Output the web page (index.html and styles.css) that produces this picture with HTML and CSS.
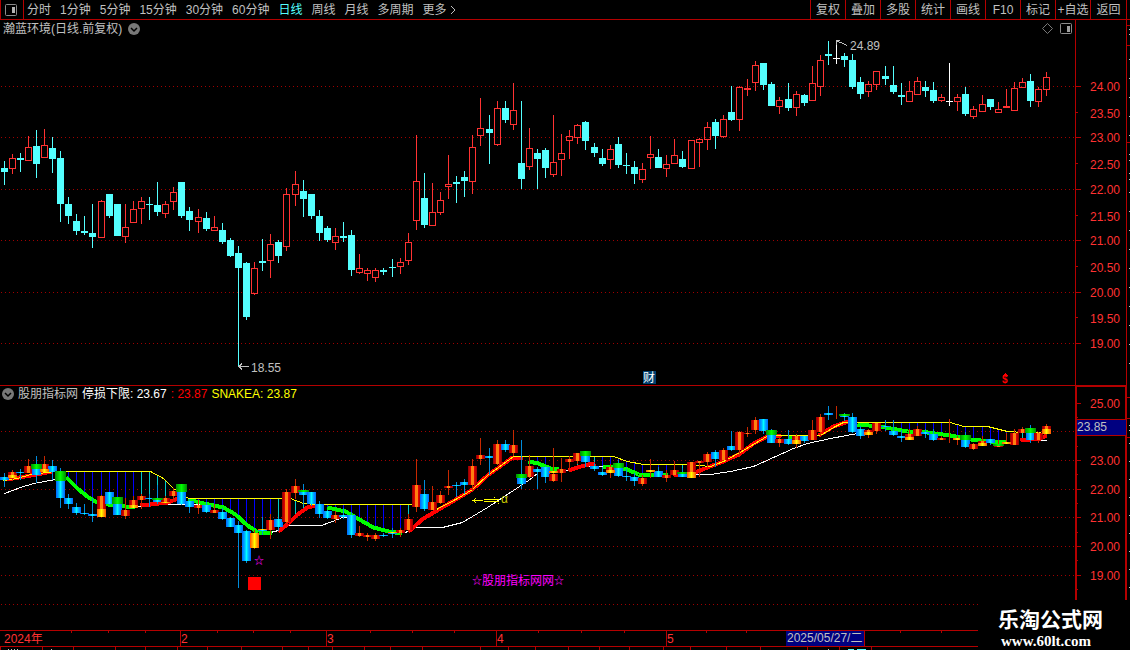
FILE: index.html
```html
<!DOCTYPE html>
<html lang="zh-CN">

<head>
    <meta charset="UTF-8">
    <meta name="viewport" content="width=device-width, initial-scale=1.0">
    <title>瀚蓝环境 日线</title>
    <link rel="stylesheet" href="styles.css">
</head>

<body>
    <header class="topbar">
        <button class="side-toggle" aria-label="侧栏">
            <svg width="12" height="12" viewBox="0 0 12 12">
                <rect x="0.5" y="0.5" width="11" height="11" rx="1" fill="none" stroke="#8c8c8c"/>
                <rect x="7" y="3" width="3" height="6" fill="#b4b4b4"/>
            </svg>
        </button>
        <nav class="periods">
            <button>分时</button>
            <button>1分钟</button>
            <button>5分钟</button>
            <button>15分钟</button>
            <button>30分钟</button>
            <button>60分钟</button>
            <button class="active">日线</button>
            <button>周线</button>
            <button>月线</button>
            <button>多周期</button>
            <button class="more">更多
                <svg width="6" height="10" viewBox="0 0 6 10"><path d="M1 1l4 4-4 4" fill="none" stroke="#c0c0c0"/></svg>
            </button>
        </nav>
        <div class="tools">
            <button>复权</button>
            <button>叠加</button>
            <button>多股</button>
            <button>统计</button>
            <button>画线</button>
            <button>F10</button>
            <button>标记</button>
            <button>+自选</button>
            <button>返回</button>
        </div>
    </header>

    <div class="content">
        <main>
            <section class="pane price">
                <div class="plot">
                    <div class="pane-title">
                        <span>瀚蓝环境(日线.前复权)</span>
                        <svg width="12" height="12" viewBox="0 0 12 12"><circle cx="6" cy="6" r="6" fill="#787878"/><path d="M3 5l3 3 3-3" fill="none" stroke="#000" stroke-width="1.5"/></svg>
                        <div class="pane-tools">
                            <svg width="11" height="11" viewBox="0 0 11 11"><path d="M5.5 0.5l5 5-5 5-5-5z" fill="none" stroke="#787878"/></svg>
                            <svg width="12" height="12" viewBox="0 0 12 12"><rect x="0.5" y="0.5" width="11" height="10" rx="1" fill="none" stroke="#8c8c8c"/><rect x="7" y="3" width="3" height="6" fill="#a0a0a0"/></svg>
                        </div>
                    </div>
                    <svg id="price" class="chart"></svg>
                </div>
                <svg id="price-axis" class="axis"></svg>
            </section>
            <section class="pane snake">
                <div class="plot">
                    <div class="pane-title">
                        <svg width="12" height="12" viewBox="0 0 12 12"><circle cx="6" cy="6" r="6" fill="#787878"/><path d="M3 5l3 3 3-3" fill="none" stroke="#000" stroke-width="1.5"/></svg>
                        <span>股朋指标网</span>
                        <span class="white">停损下限: 23.67</span>
                        <span class="red">: 23.87</span>
                        <span class="yellow">SNAKEA: 23.87</span>
                    </div>
                    <svg id="snake" class="chart"></svg>
                </div>
                <svg id="snake-axis" class="axis"></svg>
            </section>
        </main>
        <aside>
            <svg id="edge" width="3"></svg>
        </aside>
    </div>

    <footer>
        <svg id="dates"></svg>
        <div class="watermark">
            <strong>乐淘公式网</strong>
            <a href="#">www.60lt.com</a>
        </div>
    </footer>

    <script>
        //data: 最高,实体上,实体下,最低,颜色 (c 阴 r 阳 w 平), 单位为主图的行
        const candles = `161,168,172,185,c 154,158,169,174,r 153,158,160,172,c 136,147,161,161,r 130,146,164,178,c
            129,145,158,158,r 137,148,159,173,c 151,158,204,222,c 197,204,216,224,c 214,221,231,235,c
            216,231,233,235,c 204,233,237,248,c 200,201,238,238,r 194,194,216,218,c 204,204,236,236,c
            204,227,237,243,r 201,209,223,223,r 197,201,209,224,r 197,204,205,220,c 182,205,212,216,c
            201,204,214,218,r 187,192,202,210,r 182,182,216,218,c 207,211,220,231,c 209,217,222,233,r
            212,218,229,231,c 216,227,231,231,r 223,230,242,244,c 238,240,256,257,c 246,253,268,366,c
            262,263,317,320,c 262,268,294,295,r 239,261,263,271,c 234,244,261,278,r 240,242,256,263,c
            188,194,247,251,r 171,184,195,206,r 180,191,199,217,c 194,194,216,219,c 210,216,233,241,c
            226,228,240,242,c 228,236,243,250,r 222,236,238,242,c 230,235,270,276,c 254,268,273,274,r
            268,270,274,281,r 268,270,278,282,r 268,270,272,275,c 259,267,268,277,c 258,262,267,274,r
            233,242,261,265,r 135,181,221,230,r 173,198,225,228,c 183,212,226,226,r 192,200,213,215,r
            155,184,187,199,r 176,182,184,203,c 171,177,181,197,c 135,147,182,194,r 98,128,136,146,r
            115,129,133,164,c 101,108,145,146,r 101,108,120,123,c 83,110,125,130,r 101,163,179,189,c
            128,148,167,170,r 149,153,159,189,c 148,150,168,178,c 115,162,175,177,r 134,153,160,176,r
            130,136,141,159,r 124,125,138,144,r 121,122,141,150,c 143,147,153,157,c 149,158,164,166,c
            145,149,160,169,r 137,144,165,168,c 153,165,166,174,c 161,167,174,184,c 163,169,180,183,r
            136,154,158,169,r 149,157,168,168,c 155,164,169,177,r 139,155,164,164,r 151,159,167,168,c
            140,140,169,169,r 138,139,143,167,r 122,127,140,150,r 119,122,136,149,c 115,119,137,138,r
            86,112,120,121,c 86,87,120,131,r 79,88,90,96,r 61,65,83,91,r 63,63,85,90,c
            82,84,106,106,c 97,100,107,114,r 83,99,108,111,c 91,94,108,116,r 94,95,103,106,c
            66,83,101,101,r 55,60,87,96,r 41,54,56,65,c 40,58,59,64,w 53,56,60,67,c
            54,60,87,89,c 77,82,94,99,c 81,84,92,97,r 71,71,85,90,r 66,76,79,85,c
            66,85,92,94,c 83,95,97,105,c 81,91,102,102,r 77,81,95,95,r 81,87,91,97,c
            82,90,101,103,c 94,97,101,102,r 63,101,102,106,w 94,97,102,111,r 87,94,114,116,c
            106,109,117,119,r 95,104,112,112,r 99,99,107,110,c 102,109,113,113,r 89,106,108,108,r
            82,88,111,111,r 78,82,88,88,r 74,81,101,107,c 87,89,102,107,r 72,77,90,96,r`
            .trim().split(/\s+/).map(s => s.split(',').map((v, k) => k < 4 ? +v : v))

        //副图的线
        const yellowLines = [
            [[3,480],[17,478],[30,474],[47,472],[55,471],[150,471],[163,478],[173,488],[188,498],[290,498],[303,503],[315,504],[412,504]],
            [[436,509],[457,498],[472,489],[487,475],[513,456],[613,456],[627,461],[643,464],[687,464],[710,466],[723,461],[743,450],[768,435],[820,435],[833,427],[843,422],[950,422],[963,426],[987,426],[1007,431],[1023,432],[1040,432]]
        ]
        const whiteLines = [
            [[4,493],[20,487],[33,483],[55,479]],
            [[138,506],[150,504],[187,504],[200,504]],
            [[270,532],[278,530],[288,525],[321,525],[332,521],[342,517],[347,517]],
            [[405,532],[415,527],[442,527],[462,522],[487,507],[513,490],[528,480],[537,473]],
            [[558,471],[568,470],[585,466],[602,466]],
            [[690,474],[710,474],[730,471],[753,466],[773,457],[793,448],[807,443],[830,438],[857,433]],
            [[1023,440],[1046,440]]
        ]
        const trends = [
            ['red', [[3,479],[13,478],[30,475],[52,471]]],
            ['lime', [[66,477],[77,488],[88,497],[97,502],[113,505],[135,507]]],
            ['red', [[140,505],[150,504],[167,502],[178,498]]],
            ['lime', [[188,499],[203,503],[223,507],[235,514],[247,525],[258,532],[271,532]]],
            ['red', [[278,531],[288,523],[297,514],[307,507],[316,505]]],
            ['lime', [[327,507],[345,511],[357,518],[373,527],[388,531],[402,533]]],
            ['red', [[408,531],[423,518],[440,508],[457,498],[472,489],[487,475],[512,457],[522,457]]],
            ['lime', [[528,461],[538,463],[550,468],[558,469]]],
            ['red', [[568,470],[577,467],[588,464],[595,463]]],
            ['lime', [[602,466],[613,466],[627,469],[638,474],[667,474]]],
            ['red', [[673,475],[695,472],[707,467],[723,461],[740,453],[753,443],[767,436],[781,435]]],
            ['lime', [[788,437],[800,437]]],
            ['red', [[818,435],[833,426],[848,421]]],
            ['lime', [[857,424],[880,426],[907,431],[927,432],[950,435],[970,439],[990,441],[1006,442]]],
            ['red', [[1020,440],[1040,438],[1046,435]]]
        ]
        //K线上的变色段
        const marks = [
            [1,475,478,'y'],[4,464,469,'g'],[5,469,472,'y'],[7,471,481,'g'],[12,509,517,'y'],[14,497,504,'g'],
            [16,505,508,'y'],[19,498,500,'g'],[20,502,503,'y'],[22,484,492,'g'],[31,533,548,'y'],[32,529,530,'y'],
            [37,490,492,'g'],[48,532,533,'y'],[64,474,478,'g'],[68,471,473,'y'],[72,451,456,'g'],[75,470,473,'y'],
            [76,463,468,'g'],[80,470,472,'y'],[84,472,474,'g'],[85,472,478,'y'],[95,430,435,'g'],[98,440,444,'y'],
            [104,414,416,'g'],[107,432,435,'y'],[112,437,440,'y'],[118,438,440,'y'],[119,435,440,'g'],
            [121,443,446,'y'],[123,444,446,'g'],[124,442,444,'y'],[127,428,433,'g'],[129,429,434,'y']
        ]
        const BASE = 1075
        const SLOTS = 133
        const priceColor = { c: '#54ffff', r: '#ff3232', w: '#ffffff' }

        //获取元素
        const priceSvg = document.querySelector('#price')
        const priceAxis = document.querySelector('#price-axis')
        const snakeSvg = document.querySelector('#snake')
        const snakeAxis = document.querySelector('#snake-axis')
        const datesSvg = document.querySelector('#dates')
        const edgeSvg = document.querySelector('#edge')

        function rect(x, y, w, h, fill){
            return `<rect x="${x}" y="${y}" width="${w}" height="${h}" fill="${fill}"/>`
        }
        function text(x, y, s, cls){
            return `<text x="${x}" y="${y}" class="${cls}">${s}</text>`
        }
        //主图、副图坐标
        function priceY(p){
            return Math.round(86 + (24 - p) * 51.4)
        }
        function snakeY(p){
            return Math.round(460 + (23 - p) * 28.7)
        }
        function toSnake(y){
            return Math.round(431.4 + (y - 86) * 0.5606)
        }
        function grid(y, w){
            return `<line x1="1" x2="${w}" y1="${y + 0.5}" y2="${y + 0.5}" class="grid"/>`
        }
        function line(points, k, cls, color){
            const d = points.map(p => (p[0] * k + 0.5) + ',' + (p[1] + 0.5)).join(' ')
            return `<polyline points="${d}" class="${cls}" stroke="${color}"/>`
        }
        //线在 x 处的高度
        function valueAt(points, x){
            for (let i = 1; i < points.length; i++) {
                const [a, b] = [points[i - 1], points[i]]
                if (x >= a[0] && x <= b[0]) {
                    return Math.round(a[1] + (b[1] - a[1]) * (x - a[0]) / (b[0] - a[0]))
                }
            }
            return null
        }

        //主图
        function drawPrice(){
            const w = priceSvg.clientWidth
            priceSvg.setAttribute('viewBox', `0 38 ${w} 347`)
            let str = ''
            for (let p = 19; p <= 24; p++) str += grid(priceY(p), w)
            const xs = candles.map((c, i) => Math.floor((i + 0.5) * w / SLOTS))
            candles.forEach(function(c, i){
                const [hi, top, bot, lo, kind] = c
                const x = xs[i]
                const color = priceColor[kind]
                const h = bot - top
                if (kind == 'r' && h > 2) {
                    str += rect(x, hi, 1, top - hi, color) + rect(x, bot, 1, lo - bot, color)
                    str += `<rect x="${x - 2.5}" y="${top + 0.5}" width="6" height="${h - 1}" fill="none" stroke="${color}"/>`
                } else {
                    str += rect(x, hi, 1, lo - hi, color) + rect(x - 3, top, 7, h, color)
                }
            })
            str += `<path d="M${xs[29]} 366.5h11M${xs[29] + 4} 363.5l-3 3 3 3" class="pointer"/>` + text(xs[29] + 13, 372, '18.55', 'note')
            str += `<path d="M${xs[103] + 1} 41.5l4 1 6 3M${xs[103]} 44.5v-4h4" class="pointer"/>` + text(xs[103] + 14, 50, '24.89', 'note')
            const k = w / BASE
            str += rect(643 * k, 371, 13, 13, '#004070') + text(643 * k, 382, '财', 'tag')
            str += `<path d="M${1002 * k} 376l3-3 3 3z" fill="red"/>` + text(1002 * k, 383, '$', 'dividend')
            priceSvg.innerHTML = str
        }

        //副图
        function drawSnake(){
            const w = snakeSvg.clientWidth
            const k = w / BASE
            snakeSvg.setAttribute('viewBox', `0 402 ${w} 228`)
            let str = `<defs>
                <linearGradient id="r"><stop offset="0" stop-color="#8c0000"/><stop offset=".32" stop-color="#e60000"/><stop offset=".36" stop-color="#ff8010"/><stop offset=".66" stop-color="#ff8010"/><stop offset=".7" stop-color="#e60000"/><stop offset="1" stop-color="#8c0000"/></linearGradient>
                <linearGradient id="c"><stop offset="0" stop-color="#0064ff"/><stop offset=".32" stop-color="#00b4ff"/><stop offset=".5" stop-color="#00ffff"/><stop offset=".68" stop-color="#00b4ff"/><stop offset="1" stop-color="#0064ff"/></linearGradient>
                <linearGradient id="g"><stop offset="0" stop-color="#008c00"/><stop offset=".5" stop-color="#00ff00"/><stop offset="1" stop-color="#008c00"/></linearGradient>
                <linearGradient id="y"><stop offset="0" stop-color="#ff5000"/><stop offset=".35" stop-color="#ffc800"/><stop offset=".5" stop-color="#ffff00"/><stop offset=".65" stop-color="#ffc800"/><stop offset="1" stop-color="#ff5000"/></linearGradient>
            </defs>`
            for (let p = 18; p <= 24; p++) str += grid(snakeY(p), w)
            const xs = candles.map((c, i) => Math.floor((i + 0.5) * w / SLOTS))
            //黄线到趋势线的竖条
            xs.forEach(function(x){
                yellowLines.forEach(function(yl){
                    const y1 = valueAt(yl, x / k)
                    trends.forEach(function(t){
                        const y2 = valueAt(t[1], x / k)
                        if (y1 && y2 && y2 - y1 > 2) str += rect(x, y1, 1, y2 - y1, t[0] == 'lime' ? '#0000ff' : '#00c8c8')
                    })
                })
            })
            whiteLines.forEach(l => str += line(l, k, 'thin', '#ffffff'))
            trends.forEach(t => str += line(t[1], k, 'thick', t[0]))
            yellowLines.forEach(l => str += line(l, k, 'thin', '#ffff00'))
            candles.forEach(function(c, i){
                const [hi, top, bot, lo] = c.slice(0, 4).map(toSnake)
                const kind = c[4] == 'c' ? 'c' : 'r'
                str += rect(xs[i], hi, 1, Math.max(lo - hi, 1), kind == 'c' ? '#008cdc' : '#c82800')
                if (c[4] != 'w') str += rect(xs[i] - 4, top, 9, Math.max(bot - top, 1), `url(#${kind})`)
            })
            marks.forEach(function(m){
                const wide = m[3] == 'g' ? 11 : 9
                str += rect(xs[m[0]] - (wide - 1) / 2, m[1], wide, m[2] - m[1], `url(#${m[3]})`)
            })
            str += text(254 * k, 564, '☆', 'magenta small') + rect(Math.round(248 * k), 577, 13, 13, '#ff0000')
            str += text(472 * k, 584, '☆', 'magenta small') + text(482 * k, 585, '股朋指标网网', 'magenta') + text(554 * k, 584, '☆', 'magenta small')
            str += `<g transform="translate(${Math.round(473 * k)} 0)"><path d="M0 500.5h10M3 498.5l-3 2 3 2M11 499.5h9M11 501.5h9" class="arrow"/><path d="M20 499.5h6M20 501.5h6M21 497.5h1M25 503.5h1" class="arrow"/>${text(28, 503, 'α', 'olive')}</g>`
            snakeSvg.innerHTML = str
        }

        //坐标轴
        function drawAxes(){
            priceAxis.setAttribute('viewBox', '0 20 51 365')
            let str = rect(0, 20, 1, 365, '#b40000')
            for (let p = 24; p >= 19; p -= 0.5) {
                const y = priceY(p)
                str += rect(1, y, p % 1 ? 2 : 5, 1, '#b40000') + text(15, y + (p % 1 ? 6 : 5), p.toFixed(2), 'scale')
            }
            priceAxis.innerHTML = str

            snakeAxis.setAttribute('viewBox', '0 386 51 244')
            str = rect(0, 386, 51, 1, '#b40000') + rect(0, 386, 2, 244, '#b40000') + rect(50, 386, 1, 244, '#b40000')
            for (let p = 25; p >= 18.5; p -= 0.5) {
                str += rect(2, snakeY(p), p % 1 ? 1 : 4, 1, '#b40000')
                if (p % 1 == 0 && p != 24) str += text(15, snakeY(p) + 5, p.toFixed(2), 'scale')
            }
            str += rect(1, 419, 50, 17, '#b40000') + rect(2, 420, 49, 15, '#000080') + text(2, 431, '23.85', 'note')
            snakeAxis.innerHTML = str

            str = ''
            ;[25, 45, 142, 397, 418, 437].forEach(y => str += rect(0, y - 20, 3, 1, '#b40000'))
            ;[29, 34, 59, 78, 97, 116, 135, 154, 160, 173, 179, 192, 211, 230, 249, 268, 287, 306, 325, 344, 363, 425, 430, 443, 461, 479, 497, 515, 533, 551, 569, 587].forEach(y => str += rect(2, y - 20, 1, 1, '#c0c0c0'))
            edgeSvg.innerHTML = str
        }

        //日期栏
        function drawDates(){
            const w = datesSvg.clientWidth
            const k = w / 1130
            let str = rect(0, 0, w, 1, '#b40000') + rect(0, 16, w, 1, '#b40000') + text(4, 13, '2024年', 'scale')
            ;[[180, '2'], [326, '3'], [496, '4'], [666, '5']].forEach(function(m){
                str += rect(Math.round(m[0] * k), 0, 1, 16, '#b40000') + text(m[0] * k + 1, 13, m[1], 'scale')
            })
            ;[71, 108, 145, 217, 253, 290, 370, 412, 454, 538, 581, 624, 706, 746, 900, 941].forEach(x => str += rect(Math.round(x * k), 1, 1, 2, '#b40000'))
            ;[0, 42, 73, 115, 145, 177, 207, 241, 282, 308, 332, 364, 390, 422, 480, 508, 535, 568, 599, 629, 663, 690, 726, 760, 807, 839, 871].forEach(x => str += rect(Math.round(x * k), 17, 1, 3, '#b40000'))
            ;[8, 11, 14, 17, 51, 828].forEach(x => str += rect(Math.round(x * k), 19, 1, 1, '#c0c0c0'))
            str += rect(848 * k, 19, 6, 1, '#54ffff') + rect(857 * k, 19, 9, 1, '#54ffff')
            str += rect(786 * k, 1, 78, 15, '#000080') + rect(786 * k + 78, 1, 1, 15, '#b40000') + text(787 * k, 12, '2025/05/27/二', 'note')
            datesSvg.innerHTML = str
        }

        function render(){
            drawPrice()
            drawSnake()
            drawAxes()
            drawDates()
        }
        render()
        window.addEventListener('resize', render)
    </script>
</body>

</html>
```
FILE: styles.css
```css
body {
    margin: 0;
    background-color: #000;
    color: #c0c0c0;
    font-family: "Liberation Sans", "Noto Sans CJK SC", sans-serif;
    font-size: 12px;
    line-height: 16px;
    overflow-x: hidden;
}

button {
    cursor: pointer;
    background: none;
    border: 0;
    padding: 0;
    margin: 0;
    color: inherit;
    font: inherit;
    white-space: nowrap;
}

svg {
    display: block;
    flex: none;
}

.topbar {
    display: flex;
    height: 19px;
    border-bottom: 1px solid #b40000;
}

.side-toggle {
    display: flex;
    align-items: center;
    box-sizing: border-box;
    width: 24px;
    padding-left: 4px;
    border-left: 1px solid #b40000;
    border-right: 1px solid #b40000;
}

.periods {
    display: flex;
    flex: 1;
    gap: 9px;
    padding-left: 3px;
}

.periods .active {
    color: #54ffff;
}

.more {
    display: flex;
    align-items: center;
    gap: 3px;
}

.tools {
    display: flex;
    padding-right: 3px;
}

.tools button {
    box-sizing: border-box;
    width: 35px;
    border-left: 1px solid #b40000;
}

.tools button:last-child {
    width: 37px;
    border-right: 1px solid #b40000;
}

.content {
    display: flex;
}

main {
    flex: 1;
    min-width: 0;
}

aside {
    width: 3px;
    border-left: 1px solid #b40000;
}

aside svg {
    height: 580px;
}

.pane {
    display: flex;
}

.price {
    border-bottom: 1px solid #b40000;
}

.plot {
    flex: 1;
    min-width: 0;
}

.pane-title {
    display: flex;
    align-items: center;
    gap: 6px;
    height: 18px;
    padding-left: 3px;
}

.pane-tools {
    display: flex;
    flex: 1;
    justify-content: flex-end;
    gap: 7px;
    padding-right: 3px;
}

.snake .pane-title {
    gap: 4px;
    height: 16px;
    padding-left: 2px;
}

.white {
    color: #fff;
}

.red {
    color: #f00;
}

.yellow {
    color: #ff0;
}

.chart {
    width: 100%;
    shape-rendering: crispEdges;
}

.price .chart {
    height: 347px;
}

.snake .chart {
    height: 228px;
}

.axis {
    width: 51px;
    shape-rendering: crispEdges;
}

.price .axis {
    height: 365px;
}

.snake .axis {
    height: 244px;
}

.grid {
    stroke: #a00000;
    stroke-dasharray: 1 3;
}

.thin {
    fill: none;
    stroke-width: 1;
}

.thick {
    fill: none;
    stroke-width: 4;
}

.pointer {
    fill: none;
    stroke: #c0c0c0;
}

.arrow {
    fill: none;
    stroke: #ff0;
}

.scale {
    fill: #ff3232;
}

.note {
    fill: #c0c0c0;
}

.tag {
    fill: #fff;
}

.dividend {
    fill: #f00;
    font-size: 10px;
    font-weight: bold;
}

.magenta {
    fill: #f0f;
}

.small {
    font-size: 10px;
}

.olive {
    fill: #c8c800;
}

footer {
    position: relative;
}

#dates {
    width: 100%;
    height: 20px;
}

.watermark {
    position: absolute;
    right: 0;
    bottom: 0;
    box-sizing: border-box;
    width: 152px;
    height: 50px;
    padding: 3px 0 0 20px;
    background-color: #000;
    color: #fff;
}

.watermark strong {
    display: block;
    font-family: "Noto Sans CJK SC", sans-serif;
    font-size: 21px;
    line-height: 30px;
}

.watermark a {
    display: block;
    padding-left: 3px;
    color: #fff;
    font: bold 15px/16px "Liberation Serif", serif;
    text-decoration: none;
}
```
